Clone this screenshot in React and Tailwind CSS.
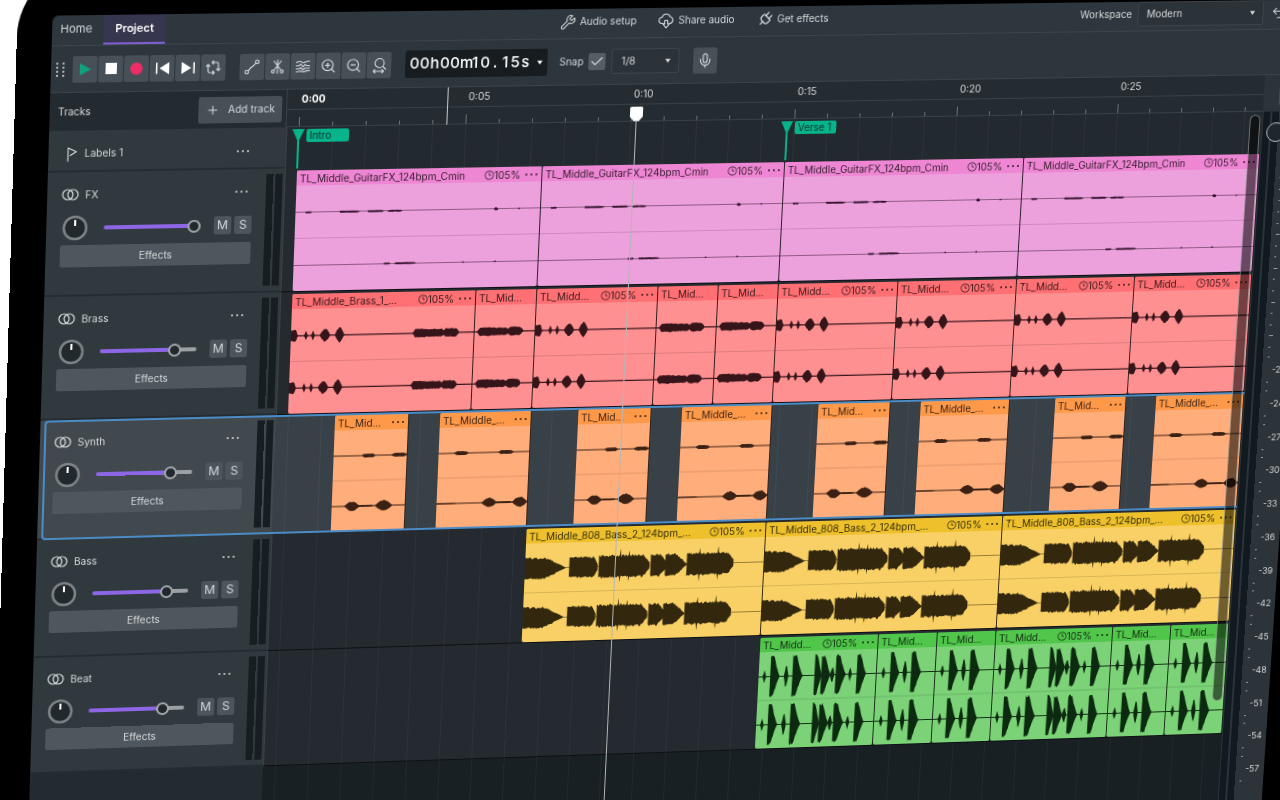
import React, { useState } from "react";
import { Check, Clock3, Mic, Plus, Plug, Undo2, Volume2, Wrench, ZoomIn, ZoomOut } from "lucide-react";

// One bar is 122px wide on the timeline, one second is 33px
const brassHits = [
  [0, 7, 14, "burst"],
  [13, 17, 10, "tick"],
  [20, 24, 10, "tick"],
  [29, 39, 13, "swell"],
  [44, 53, 15, "swell"],
];
const brassLong = (x) => [
  [x, x + 15, 9, "lens"],
  [x + 10, x + 32, 8, "block"],
  [x + 30, x + 46, 9, "lens"],
];
const guitar = [
  [10, 16, 2, "block"],
  [44, 64, 2, "block"],
  [72, 88, 2, "block"],
  [92, 106, 2, "block"],
  [198, 202, 3, "lens"],
  [222, 224, 2, "lens"],
];
const guitarLow = [
  [90, 96, 2, "block"],
  [101, 122, 2, "block"],
  [168, 170, 2, "lens"],
  [200, 202, 2, "lens"],
];
const bassNotes = [
  [0, 41, 23, "taper"],
  [45, 74, 22, "block"],
  [75, 127, 24, "block"],
  [95, 99, 36, "tick"],
  [104, 108, 33, "tick"],
  [128, 147, 24, "taper"],
  [143, 165, 24, "taper"],
  [165, 213, 24, "block"],
  [176, 180, 36, "tick"],
  [195, 199, 37, "tick"],
];
const beatShort = [
  [5, 9, 15, "tick"],
  [14, 24, 44, "hit"],
  [27, 32, 30, "tick"],
  [36, 47, 44, "hit"],
];
const beatLong = [
  [4, 8, 15, "tick"],
  [12, 22, 44, "hit"],
  [26, 31, 28, "tick"],
  [35, 46, 44, "hit"],
  [58, 66, 44, "hit"],
  [65, 75, 42, "hit"],
  [74, 79, 20, "tick"],
  [80, 91, 42, "hit"],
  [93, 97, 16, "tick"],
  [102, 112, 44, "hit"],
];

const fxClip = { gap: 0, length: 244, name: "TL_Middle_GuitarFX_124bpm_Cmin", speed: true, waves: [guitar, guitarLow] };
const brassBar = { gap: 0, length: 122, name: "TL_Midd…", speed: true, waves: [brassHits, brassHits] };
const brassHalf = { gap: 0, length: 61, name: "TL_Mid…", noMenu: true, waves: [brassLong(3), brassLong(3)] };
const synthShort = {
  gap: 47,
  length: 74,
  name: "TL_Mid…",
  waves: [
    [[29, 42, 4, "lens"], [59, 74, 4, "lens"]],
    [[13, 28, 10, "swell"], [27, 42, 2, "block"], [44, 61, 11, "swell"]],
  ],
};
const synthLong = {
  gap: 31,
  length: 92,
  name: "TL_Middle_…",
  waves: [
    [[16, 30, 4, "lens"], [61, 76, 4, "lens"]],
    [[0, 20, 1, "block"], [46, 61, 10, "swell"], [60, 77, 2, "block"], [77, 92, 11, "swell"]],
  ],
};
const bassClip = { gap: 0, length: 244, name: "TL_Middle_808_Bass_2_124bpm_…", speed: true, waves: [bassNotes, bassNotes] };
const beatBar = { gap: 0, length: 122, name: "TL_Midd…", speed: true, waves: [beatLong, beatLong] };
const beatHalf = { gap: 0, length: 61, name: "TL_Mid…", noMenu: true, waves: [beatShort, beatShort] };

const tracks = [
  {
    name: "FX",
    volume: 100,
    height: "h-[123px]",
    body: "bg-[#eca0dc]",
    head: "bg-[#ef86d4]",
    ink: "#33142e",
    line: 1.2,
    clips: [fxClip, fxClip, fxClip, fxClip],
  },
  {
    name: "Brass",
    volume: 82,
    height: "h-[123px]",
    body: "bg-[#ff9092]",
    head: "bg-[#ff7074]",
    ink: "#35151a",
    line: 2.4,
    clips: [
      {
        gap: 0,
        length: 183,
        name: "TL_Middle_Brass_1_…",
        speed: true,
        waves: [[...brassHits, ...brassLong(122)], [...brassHits, ...brassLong(122)]],
      },
      brassHalf,
      brassBar,
      brassHalf,
      brassHalf,
      brassBar,
      brassBar,
      brassBar,
      brassBar,
    ],
  },
  {
    name: "Synth",
    volume: 82,
    selected: true,
    height: "h-[120px]",
    body: "bg-[#ffad7a]",
    head: "bg-[#ff994a]",
    ink: "#3a2114",
    line: 1.6,
    clips: [0, 1, 2, 3].flatMap(() => [synthShort, synthLong]),
  },
  {
    name: "Bass",
    volume: 82,
    height: "h-[119px]",
    body: "bg-[#f8d065]",
    head: "bg-[#eec12c]",
    ink: "#33280d",
    line: 1.4,
    clips: [{ ...bassClip, gap: 244 }, bassClip, bassClip],
  },
  {
    name: "Beat",
    volume: 82,
    height: "h-[118px]",
    body: "bg-[#7bd277]",
    head: "bg-[#50c64b]",
    ink: "#0c2a0f",
    line: 2,
    clips: [{ ...beatBar, gap: 488 }, beatHalf, beatHalf, beatBar, beatHalf, beatHalf],
  },
];

const noise = (n) => {
  const s = Math.sin(n * 12.9898) * 43758.5453;
  return s - Math.floor(s);
};

const envelopes = {
  lens: (t) => Math.min(1, 0.25 + 1.5 * Math.sin(Math.PI * t)),
  swell: (t) => 0.1 + 0.9 * Math.sin(Math.PI * t),
  burst: (t) => (t < 0.7 ? 0.8 + 0.2 * t : 2.9 * (1 - t)),
  tick: (t) => 1 - Math.abs(2 * t - 1),
  hit: (t) => (t < 0.35 ? 1 : Math.pow(1 - (t - 0.35) / 0.65, 1.3)),
  block: (t) => (t > 0.88 ? 1 - (t - 0.88) * 6 : 1),
  taper: (t) => (t > 0.5 ? 1 - (t - 0.5) * 1.9 : 1),
};

// Closed outline of one burst of sound around the centre line
const burstPath = ([from, to, amp, kind], centre) => {
  const top = [];
  const bottom = [];
  const rough = amp > 30 ? 0.12 : 0.2;
  for (let x = from; x <= to; x += 1) {
    const level = amp * Math.max(0, envelopes[kind]((x - from) / (to - from)));
    top.push(`${x},${(centre - level * (1 - rough * noise(x + amp))).toFixed(1)}`);
    bottom.unshift(`${x},${(centre + level * (1 - rough * noise(x * 3 + amp))).toFixed(1)}`);
  }
  return `M${top.join("L")}L${bottom.join("L")}Z`;
};

const Waveform = ({ clip, track }) => (
  <svg
    className="block min-h-0 w-full flex-1"
    viewBox={`0 0 ${clip.length} 200`}
    preserveAspectRatio="none"
    aria-hidden="true"
  >
    <path d={`M0 100H${clip.length}`} stroke={track.ink} strokeOpacity="0.16" strokeWidth="1.600" />
    {clip.waves.map((bursts, i) => {
      const centre = i === 0 ? 51 : 151;
      return (
        <g key={i} fill={track.ink}>
          <path d={`M0 ${centre}H${clip.length}`} stroke={track.ink} strokeWidth={track.line} />
          {bursts.map((burst, j) => (
            <path key={j} d={burstPath(burst, centre)} />
          ))}
        </g>
      );
    })}
  </svg>
);

const Dots = ({ className }) => (
  <svg className={`h-[4px] ${className}`} viewBox="0 0 14 4" fill="currentColor" aria-hidden="true">
    <circle cx="2" cy="2" r="1" />
    <circle cx="7" cy="2" r="1" />
    <circle cx="12" cy="2" r="1" />
  </svg>
);

const Clip = ({ clip, track }) => (
  <div
    className={`flex shrink-0 flex-col overflow-hidden rounded-xs border-r border-black/80 ${track.body}`}
    style={{ marginLeft: clip.gap, width: clip.length }}
  >
    <div className={`flex h-[15px] shrink-0 items-center gap-1 px-[3px] text-[10px] leading-none text-black/80 ${track.head}`}>
      <span className="min-w-0 flex-1 whitespace-nowrap">{clip.name}</span>
      {clip.speed && (
        <span className="flex items-center">
          <Clock3 size={10} strokeWidth={1.8} />
          105%
        </span>
      )}
      {!clip.noMenu && <Dots className="w-[14px]" />}
    </div>
    <Waveform clip={clip} track={track} />
  </div>
);

const StrokeIcon = ({ children, size = 16 }) => (
  <svg
    width={size}
    height={size}
    viewBox="0 0 16 16"
    fill="none"
    stroke="currentColor"
    strokeWidth="1.1"
    strokeLinecap="round"
    strokeLinejoin="round"
    aria-hidden="true"
  >
    {children}
  </svg>
);

const ToolButton = ({ label, children }) => (
  <button
    aria-label={label}
    className="flex h-[26px] w-6 items-center justify-center rounded-xs bg-[#475057] text-[#d3d7da]"
  >
    {children}
  </button>
);

const Caret = ({ className }) => (
  <svg className={`pointer-events-none h-[7px] w-[7px] ${className}`} viewBox="0 0 8 8" fill="currentColor" aria-hidden="true">
    <path d="M1 2h6L4 6.500z" />
  </svg>
);

const MenuBar = () => (
  <header className="grid h-[30px] grid-cols-[1fr_auto_1fr] border-b border-[#3c454b] bg-[#2e373d]">
    <nav className="flex text-[11px]">
      <a href="#home" className="flex w-[50px] items-center pb-[3px] pl-2">
        Home
      </a>
      <a
        href="#project"
        className="flex w-[60px] items-center justify-center border-b-2 border-[#7f5fd0] bg-[#36364f] font-semibold text-white"
      >
        Project
      </a>
    </nav>
    <div className="flex items-center gap-[22px] pb-1">
      <button className="flex items-center gap-1">
        <Wrench size={16} strokeWidth={1.6} className="-scale-x-100 rotate-90" />
        Audio setup
      </button>
      <button className="flex items-center gap-1">
        <StrokeIcon>
          <path d="M5 10.500H4a3 3 0 0 1-.4-6A4.300 4.300 0 0 1 11.800 4a3.400 3.400 0 0 1 .6 6.500H11" />
          <path d="M6.500 7.500h3v3.500h2L8 14.800 4.700 11h1.800z" />
        </StrokeIcon>
        Share audio
      </button>
      <button className="flex items-center gap-1">
        <Plug size={17} strokeWidth={1.6} className="rotate-45" />
        Get effects
      </button>
    </div>
    <div className="flex items-center justify-end pr-[31px] pb-1">
      <label htmlFor="workspace" className="mr-[6px]">
        Workspace
      </label>
      <div className="relative">
        <select
          id="workspace"
          className="h-[25px] w-[130px] appearance-none rounded-xs border border-[#3c454b] bg-[#2b3339] px-2"
        >
          <option>Modern</option>
        </select>
        <Caret className="absolute top-[9px] right-2" />
      </div>
      <button aria-label="Undo" className="ml-2">
        <Undo2 size={14} strokeWidth={1.8} />
      </button>
    </div>
  </header>
);

const Toolbar = () => {
  const [snap, setSnap] = useState(true);

  return (
    <div className="flex h-[46px] items-center border-b border-[#3a4349] bg-[#2d363c] pl-[5px]">
      <svg width="9" height="16" viewBox="0 0 9 16" fill="#aab0b4" aria-hidden="true">
        {[1, 5, 9, 13].map((y) => (
          <React.Fragment key={y}>
            <rect x="0" y={y} width="2" height="2" />
            <rect x="6" y={y} width="2" height="2" />
          </React.Fragment>
        ))}
      </svg>
      <div className="ml-[7px] flex gap-px">
        <ToolButton label="Play">
          <svg width="14" height="14" viewBox="0 0 14 14" fill="#10a17c">
            <path d="M2 1l11 6-11 6z" />
          </svg>
        </ToolButton>
        <ToolButton label="Stop">
          <span className="h-[11px] w-[11px] bg-white" />
        </ToolButton>
        <ToolButton label="Record">
          <span className="h-[12px] w-[12px] rounded-full bg-[#ee2d68]" />
        </ToolButton>
        <ToolButton label="Skip to start">
          <svg width="15" height="14" viewBox="0 0 15 14" fill="#fff">
            <path d="M1 1.500h1.500v11H1zM14 1v12L4.500 7z" />
          </svg>
        </ToolButton>
        <ToolButton label="Skip to end">
          <svg width="15" height="14" viewBox="0 0 15 14" fill="#fff">
            <path d="M12.500 1.500H14v11h-1.500zM1 1v12l9.500-6z" />
          </svg>
        </ToolButton>
        <ToolButton label="Loop">
          <StrokeIcon>
            <path d="M7 3h4.500A1.500 1.500 0 0 1 13 4.500V11M9 13H4.500A1.500 1.500 0 0 1 3 11.500V5M1.300 6.700 3 5l1.700 1.700M11.300 9.300 13 11l1.700-1.700M8.300 1.500 6.800 3l1.500 1.500M7.700 11.500 9.200 13l-1.500 1.500" />
          </StrokeIcon>
        </ToolButton>
      </div>
      <div className="ml-[14px] flex gap-px">
        <ToolButton label="Automation">
          <StrokeIcon>
            <circle cx="3" cy="13" r="1.700" />
            <circle cx="13" cy="3" r="1.700" />
            <path d="M4.300 11.800C6 10.500 5.500 9.500 7.500 8.300S10 6.500 11.700 4.200" />
          </StrokeIcon>
        </ToolButton>
        <ToolButton label="Split">
          <StrokeIcon>
            <path d="M8 1.500v13M4.500 2.500l7 9M11.500 2.500l-7 9" />
            <circle cx="3.700" cy="12.700" r="1.400" />
            <circle cx="12.300" cy="12.700" r="1.400" />
          </StrokeIcon>
        </ToolButton>
        <ToolButton label="Spectral edit">
          <StrokeIcon>
            <path d="M1.500 4c2 0 3-1.500 4.500-.5s2.500 1.500 4 .5 2.500-1 4.500-1M1.500 7.500h2.500l2-1.500 2 2.500 2-2 2 1h2.500M1.500 10.500h3l1.500-1 2 2 2-1.500h4.500M1.500 13.500c2.500 0 3-1 4.500-.5s3 1 4.500 0 2-.5 4-.5" />
          </StrokeIcon>
        </ToolButton>
        <ToolButton label="Zoom in">
          <ZoomIn size={16} strokeWidth={1.700} />
        </ToolButton>
        <ToolButton label="Zoom out">
          <ZoomOut size={16} strokeWidth={1.700} />
        </ToolButton>
        <ToolButton label="Fit to width">
          <StrokeIcon>
            <circle cx="8.500" cy="6" r="4.500" />
            <path d="M11.800 9.300l2.700 2.700M2.500 14h10M4 12.500 2.500 14 4 15.500M11 12.500l1.500 1.500-1.500 1.500" />
          </StrokeIcon>
        </ToolButton>
      </div>
      <div className="ml-[14px] flex h-[27px] items-center rounded-xs bg-[#161c20] pl-1 text-[15px] font-medium text-white">
        {[..."00h00m10.15s"].map((char, i) => (
          <span key={i} className="w-[10px] text-center">
            {char}
          </span>
        ))}
        <Caret className="mr-1 ml-[6px]" />
      </div>
      <label htmlFor="snap" className="ml-3">
        Snap
      </label>
      <span className="relative ml-[5px] h-[17px] w-[17px]">
        <input
          id="snap"
          type="checkbox"
          checked={snap}
          onChange={() => setSnap((prev) => !prev)}
          className="block h-[17px] w-[17px] appearance-none rounded-xs bg-[#565e65]"
        />
        {snap && <Check size={15} strokeWidth={1.700} className="pointer-events-none absolute top-px left-px" />}
      </span>
      <div className="relative ml-[6px]">
        <select
          aria-label="Snap resolution"
          className="h-[25px] w-[68px] appearance-none rounded-xs border border-[#3c454b] bg-[#2b3339] px-[9px]"
        >
          <option>1/8</option>
        </select>
        <Caret className="absolute top-[9px] right-2" />
      </div>
      <div className="ml-[14px]">
        <ToolButton label="Microphone">
          <Mic size={16} strokeWidth={1.700} />
        </ToolButton>
      </div>
    </div>
  );
};

const TrackHeader = ({ track }) => {
  const [volume, setVolume] = useState(track.volume);
  const fill = `linear-gradient(90deg, #8c66e4 ${volume}%, #9aa0a4 ${volume}%)`;

  return (
    <div
      className={`flex w-[232px] shrink-0 justify-between border-b-2 border-[#262d32] pl-[14px] ${
        track.selected ? "bg-[#41494e]" : "bg-[#30393e]"
      }`}
    >
      <div className="w-[187px] pt-3">
        <div className="flex h-5 items-center">
          <svg width="17" height="12" viewBox="0 0 17 12" fill="none" stroke="currentColor" strokeWidth="1.200">
            <circle cx="6" cy="6" r="5" />
            <circle cx="11" cy="6" r="5" />
          </svg>
          <span className="ml-[6px] flex-1">{track.name}</span>
          <button aria-label={`${track.name} menu`} className="mr-1">
            <Dots className="w-[14px]" />
          </button>
        </div>
        <div className="mt-[10px] flex h-[26px] items-center">
          <svg width="28" height="26" viewBox="0 0 28 26" aria-label="Pan" role="img">
            <circle cx="14" cy="13" r="11" fill="#22292d" stroke="#7d8488" strokeWidth="2.500" />
            <path d="M14 5v6" stroke="#fff" strokeWidth="2" />
          </svg>
          <input
            type="range"
            aria-label={`${track.name} volume`}
            value={volume}
            onChange={(e) => setVolume(Number(e.target.value))}
            className="ml-[14px] h-1 w-[95px] appearance-none rounded-full [&::-webkit-slider-thumb]:h-[13px] [&::-webkit-slider-thumb]:w-[13px] [&::-webkit-slider-thumb]:appearance-none [&::-webkit-slider-thumb]:rounded-full [&::-webkit-slider-thumb]:border-2 [&::-webkit-slider-thumb]:border-[#a3a9ad] [&::-webkit-slider-thumb]:bg-[#22292d]"
            style={{ background: fill }}
          />
          <div className="ml-auto flex gap-[3px] text-xs">
            <button className="h-[18px] w-[17px] rounded-xs bg-[#4c555b]">M</button>
            <button className="h-[18px] w-[17px] rounded-xs bg-[#4c555b]">S</button>
          </div>
        </div>
        <button className="mt-1 block h-[22px] w-full rounded-xs bg-[#4e575d]">Effects</button>
      </div>
      <div className="mr-[2px] flex gap-[2px] py-[5px]">
        <span className="w-[7px] bg-[#161e22]" />
        <span className="w-[7px] bg-[#161e22]" />
      </div>
    </div>
  );
};

const TrackRow = ({ track }) => (
  <div className={`relative flex ${track.height}`}>
    <TrackHeader track={track} />
    <div
      className={`flex min-w-0 flex-1 overflow-hidden border-b border-l border-b-black/60 border-l-[#3a4247] bg-[linear-gradient(90deg,#ffffff0a_1px,transparent_1px)] bg-[length:33px_100%] bg-[position:11px_0] pt-[2px] pl-[11px] ${
        track.selected ? "bg-[#394148]" : "bg-[#242a30]"
      }`}
    >
      {track.clips.map((clip, i) => (
        <Clip key={i} clip={clip} track={track} />
      ))}
    </div>
    {track.selected && (
      <div className="pointer-events-none absolute inset-y-0 right-0 left-1 rounded-l border-y-2 border-l-2 border-[#4b8cc6]" />
    )}
  </div>
);

const Ruler = () => (
  <div className="relative flex min-w-0 flex-1 flex-col overflow-hidden bg-[#252c31] pl-3">
    <div className="flex h-[19px] items-center">
      {["0:00", "0:05", "0:10", "0:15", "0:20", "0:25"].map((time, i) => (
        <span key={time} className={`w-[165px] shrink-0 pl-[2px] ${i === 0 ? "font-bold text-white" : ""}`}>
          {time}
        </span>
      ))}
    </div>
    <div className="-ml-3 flex flex-1 items-end border-y border-[#394046] pl-3">
      {Array.from({ length: 30 }, (_, second) => (
        <span
          key={second}
          className={`w-[33px] shrink-0 border-l border-[#6b7276] ${second % 5 === 0 ? "h-[9px]" : "h-[4px]"}`}
        />
      ))}
    </div>
    <span className="absolute inset-y-0 left-[158px] w-px bg-[#c5c9cc]" />
  </div>
);

const LabelMark = ({ text }) => (
  <div className="flex w-[488px] shrink-0 items-start">
    <svg width="12" height="40" viewBox="0 0 12 40" className="-ml-[6px]" fill="#06b38a" aria-hidden="true">
      <path d="M0 0h12L7 11v29H5V11z" />
    </svg>
    <span className="ml-[2px] h-[13px] w-[42px] rounded-xs bg-[#08b48b] pl-[3px] text-[10px] leading-[13px] text-[#0a2f26]">
      {text}
    </span>
  </div>
);

const LabelLane = () => (
  <div className="flex min-w-0 flex-1 overflow-hidden border-l border-[#3a4247] bg-[#232a2f] bg-[linear-gradient(90deg,#ffffff0a_1px,transparent_1px)] bg-[length:33px_100%] bg-[position:11px_0] pt-[2px] pl-[11px]">
    <LabelMark text="Intro" />
    <LabelMark text="Verse 1" />
  </div>
);

const LevelMeter = () => (
  <aside className="relative flex w-[47px] shrink-0 flex-col bg-[#2c343a]">
    <div className="flex h-[37px] items-center pl-4">
      <button aria-label="Mute" className="flex h-[24px] w-6 items-center justify-center rounded-xs bg-[#475057]">
        <Volume2 size={14} strokeWidth={1.700} />
      </button>
    </div>
    <div className="flex flex-1 gap-[2px] pl-px">
      <span className="w-[7px] bg-[#111a20]" />
      <span className="w-[7px] bg-[#111a20]" />
      <ul className="mt-1 ml-[3px] h-[695px] flex-1 text-[9px] leading-none">
        {/* the loudest part of the scale carries ticks only */}
        {Array.from({ length: 20 }, (_, i) => (
          <li key={i} className="flex h-[5%] flex-col items-start justify-around">
            <span className="h-px w-[2px] bg-[#99a0a4]" />
            {i < 7 ? <span className="h-px w-1 bg-[#99a0a4]" /> : <span className="ml-[5px]">-{i * 3}</span>}
            <span className="h-px w-[2px] bg-[#99a0a4]" />
          </li>
        ))}
      </ul>
    </div>
    <input
      type="range"
      aria-label="Master volume"
      defaultValue="100"
      className="absolute top-[48px] left-[5px] h-[640px] w-5 appearance-none bg-transparent [direction:rtl] [writing-mode:vertical-lr] [&::-webkit-slider-thumb]:h-5 [&::-webkit-slider-thumb]:w-5 [&::-webkit-slider-thumb]:appearance-none [&::-webkit-slider-thumb]:rounded-full [&::-webkit-slider-thumb]:border [&::-webkit-slider-thumb]:border-[#b8bdc0] [&::-webkit-slider-thumb]:bg-[#1f272c]"
    />
  </aside>
);

const Arrangement = () => (
  <div className="relative flex min-w-0 flex-1 flex-col">
    <div className="flex h-[37px]">
      <div className="flex w-[232px] shrink-0 items-center justify-between border-r border-[#394046] bg-[#242b30] pr-1 pl-2">
        Tracks
        <button className="flex h-[26px] w-[82px] items-center justify-center gap-2 rounded-xs bg-[#475057]">
          <Plus size={14} strokeWidth={1.700} />
          Add track
        </button>
      </div>
      <Ruler />
    </div>
    <div className="flex h-[41px]">
      <div className="flex w-[232px] shrink-0 items-center border-b-2 border-[#262d32] bg-[#30393e] pt-[6px] pl-[15px]">
        <StrokeIcon size={16}>
          <path d="M4 15V2l8 3.700-6 3.800" />
        </StrokeIcon>
        <span className="ml-1 flex-1">Labels 1</span>
        <button aria-label="Labels 1 menu" className="mr-[35px]">
          <Dots className="w-[14px]" />
        </button>
      </div>
      <LabelLane />
    </div>
    {tracks.map((track) => (
      <TrackRow key={track.name} track={track} />
    ))}
    <div className="flex flex-1">
      <div className="w-[232px] bg-[#242b30]" />
      <div className="flex-1 bg-[#182023] bg-[linear-gradient(90deg,#ffffff0a_1px,transparent_1px)] bg-[length:33px_100%] bg-[position:12px_0]" />
    </div>

    {/* playhead */}
    <div className="pointer-events-none absolute top-[22px] bottom-0 left-[573px] flex w-[13px] flex-col items-center">
      <svg width="13" height="15" viewBox="0 0 13 15" fill="#fff" aria-hidden="true">
        <path d="M1.500 0h10A1.500 1.500 0 0 1 13 1.500V10l-4 4.500H4L0 10V1.500A1.500 1.500 0 0 1 1.500 0z" />
      </svg>
      <span className="w-px flex-1 bg-[#b5b5b5]" />
    </div>
    {/* vertical scrollbar */}
    <div className="pointer-events-none absolute top-[40px] right-[2px] h-[606px] w-[11px] rounded-full border border-white/40 bg-black/55" />
  </div>
);

const App = () => (
  <div className="h-screen overflow-hidden bg-white font-['Inter',sans-serif] text-[10px] text-[#d5d9db]">
    {/* tablet lying at an angle to the viewer */}
    <div className="-mt-[52px] -ml-[34px] w-[120vw] origin-[34px_52px] [transform:matrix3d(1.0346,-0.0127,0,0.0000288,-0.0288,1.0257,0,0.0000304,0,0,1,0,52.6,15.6,0,1)] rounded-tl-[72px] bg-black pt-[52px] pb-20 pl-[34px]">
      <div className="flex min-h-[105vh] w-[99vw] flex-col overflow-hidden rounded-tl-md">
        <MenuBar />
        <Toolbar />
        <div className="flex flex-1">
          <Arrangement />
          <LevelMeter />
        </div>
      </div>
    </div>
  </div>
);

export default App;
